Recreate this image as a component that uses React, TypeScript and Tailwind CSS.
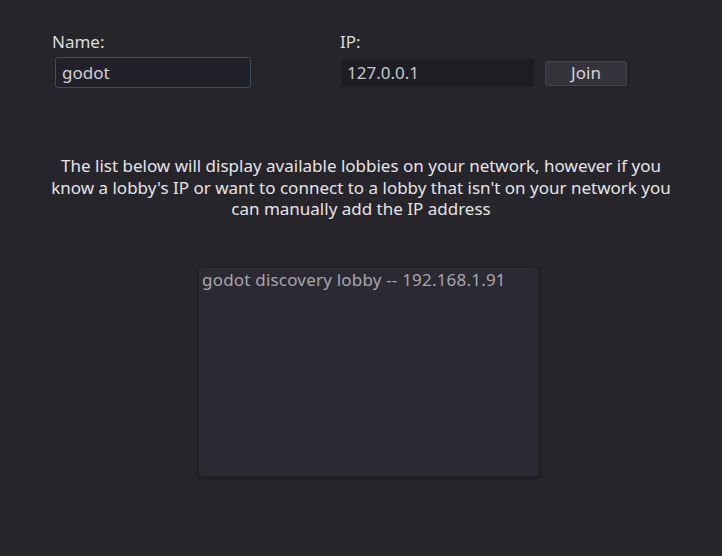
import React from "react";

export default function App() {
  return (
    <div
      className="w-[722px] h-[556px] bg-[#262529] text-[#dcdcdc] overflow-hidden"
      style={{ fontFamily: '"Noto Sans", "DejaVu Sans", sans-serif' }}
    >
      <div className="flex pt-[30px] pl-[52px]">
        <div className="w-[288px] flex flex-col">
          <div className="text-[17px] leading-[23px] h-[23px]">Name:</div>
          <div className="mt-[4px] ml-[3px] w-[196px] h-[31px] rounded-[3px] border border-[#3b4c5c] bg-[#222129] flex items-center px-[6px] text-[17px] text-[#d0d0d4]">
            godot
          </div>
        </div>
        <div className="flex flex-col">
          <div className="text-[17px] leading-[23px] h-[23px]">IP:</div>
          <div className="mt-[6px] flex items-center">
            <div className="ml-[1px] w-[194px] h-[28px] rounded-[2px] bg-[#1e1d23] border border-[#222127] flex items-center px-[5px] text-[17px] text-[#c8c8cc]">
              127.0.0.1
            </div>
            <div className="ml-[10px] w-[82px] h-[25px] rounded-[3px] bg-[#35343d] border border-[#45444d] flex items-center justify-center text-[17px] text-[#d2d2d6]">
              Join
            </div>
          </div>
        </div>
      </div>
      <p className="mt-[67px] text-center text-[17px] leading-[21.5px] text-[#e4e4e8]">
        The list below will display available lobbies on your network, however if you
        <br />
        know a lobby's IP or want to connect to a lobby that isn't on your network you
        <br />
        can manually add the IP address
      </p>
      <div className="mt-[47px] ml-[198px] w-[341px] h-[210px] rounded-[3px] bg-[#2b2a33] border border-[#232228] shadow-[0_1px_3px_rgba(0,0,0,0.4)] px-[3px] pt-[1px]">
        <div className="text-[17px] tracking-[0.2px] leading-[22px] text-[#a6a6ae]">
          godot discovery lobby -- 192.168.1.91
        </div>
      </div>
    </div>
  );
}
